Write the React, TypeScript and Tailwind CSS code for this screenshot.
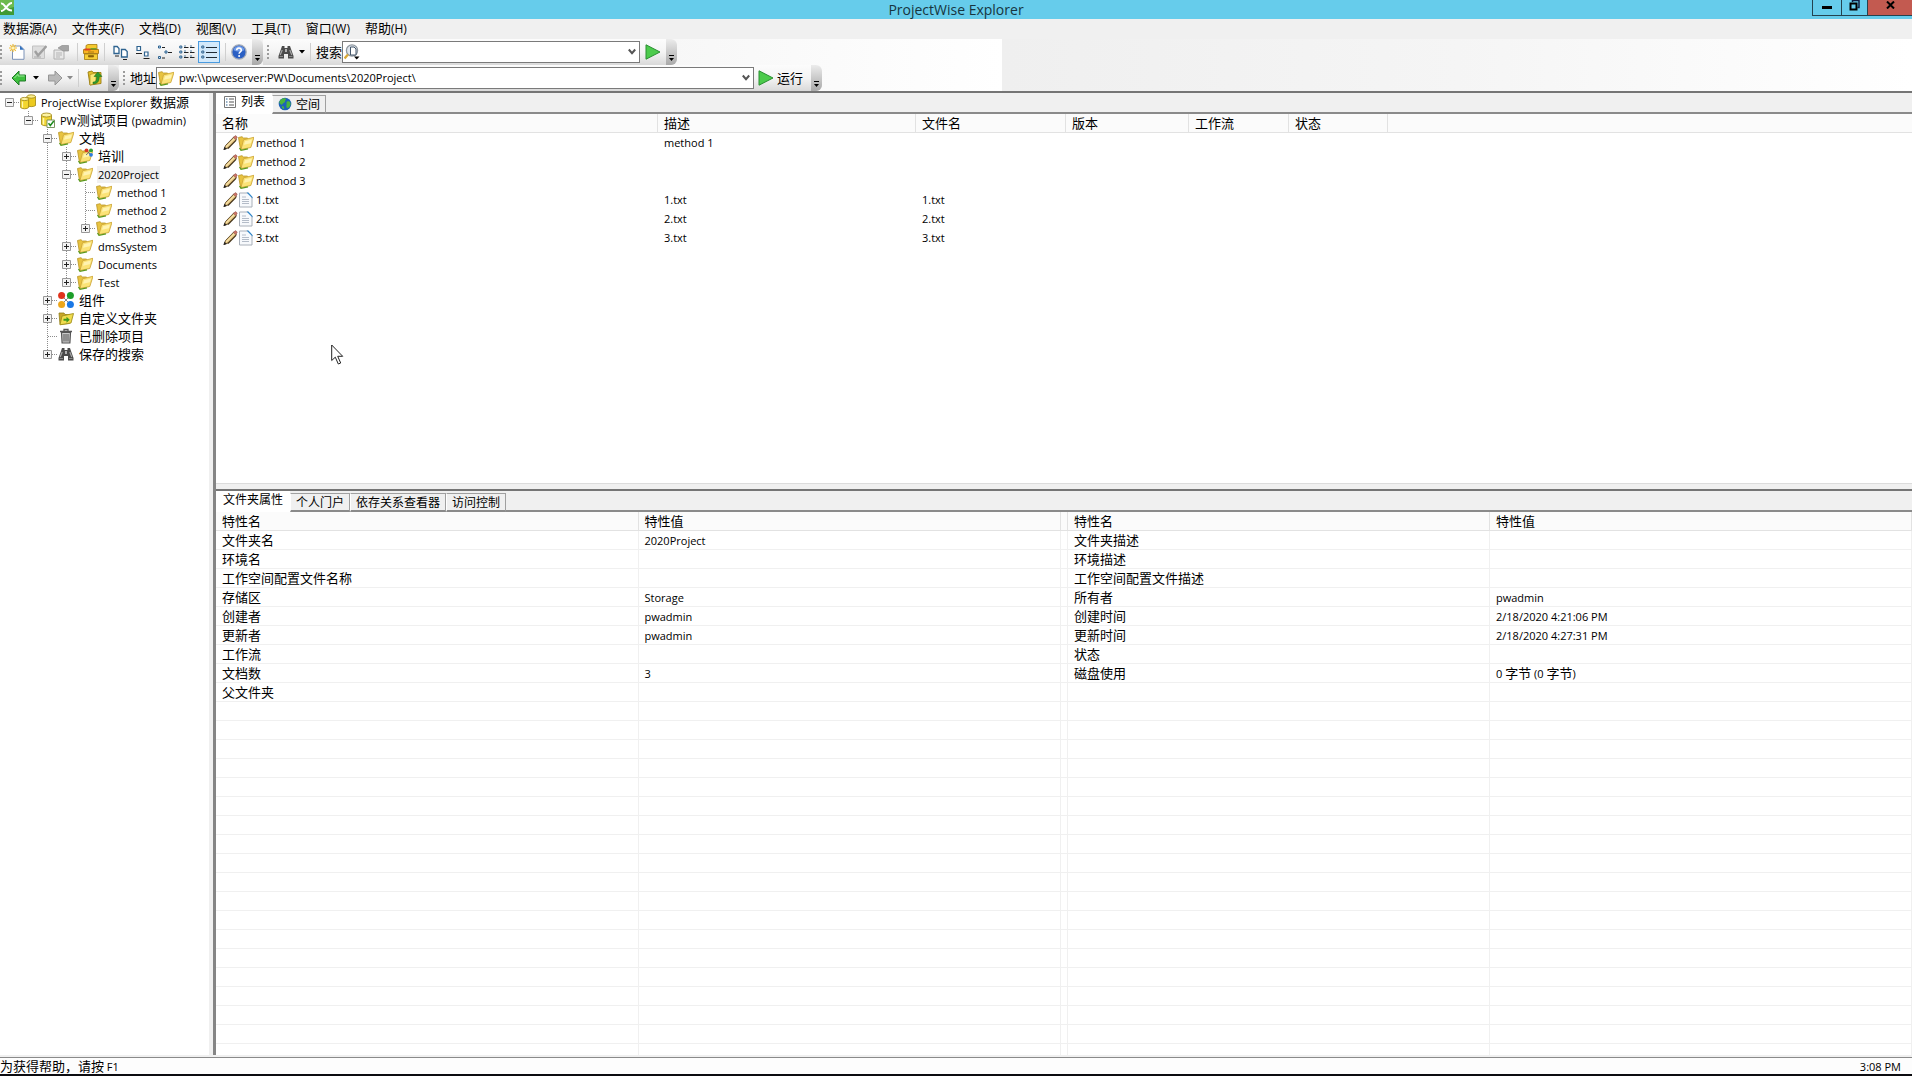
import React from "react";

const LATIN = "font-['Open_Sans','Noto_Sans_CJK_SC',sans-serif]";

interface TextProps {
  children: string;
  cjk?: string;
  latin?: string;
}

// Chinese and Latin runs are set in different sizes
const Text: React.FC<TextProps> = ({
  children,
  cjk = "text-[13px]",
  latin = "text-[11px]",
}) => {
  const runs = children.split(/([\u3000-\u9fff\uff00-\uffef]+)/).filter(Boolean);

  return (
    <span className="whitespace-pre">
      {runs.map((run, i) => (
        <span key={i} className={/[\u3000-\u9fff\uff00-\uffef]/.test(run) ? cjk : latin}>
          {run}
        </span>
      ))}
    </span>
  );
};

/* ---------- icons ---------- */

const Svg: React.FC<{ children: React.ReactNode; w?: number; h?: number }> = ({
  children,
  w = 16,
  h = 16,
}) => (
  <svg width={w} height={h} viewBox={`0 0 ${w} ${h}`} className="shrink-0" aria-hidden="true">
    {children}
  </svg>
);

const FolderShape = () => (
  <>
    <path d="M.5 2.500l3.500-.8 1.500 1.300h4L9 13l-6.500 1.500z" fill="#e8c340" stroke="#b99423" strokeWidth=".8" />
    <path d="M5.500 4.800L16 2.300 12.800 12.500 3 14.500z" fill="#fbe377" stroke="#cfa83a" strokeWidth=".9" />
    <path d="M7 6.200l7-1.800-1.200 3.800-6.800 1.600z" fill="#fff3b0" />
    <path d="M1.500 13l1.500 2.300 7-1.500" fill="none" stroke="#5c9a1f" strokeWidth="1.300" />
  </>
);

const FolderIcon = () => (
  <Svg>
    <FolderShape />
  </Svg>
);

const TrainingIcon = () => (
  <Svg>
    <FolderShape />
    <path d="M9 2.500l5 4.300M14 2.500L9 7" stroke="#555" strokeWidth=".8" />
    <circle cx="9.500" cy="2.300" r="1.900" fill="#d93a25" />
    <circle cx="14" cy="2.300" r="1.900" fill="#2fa336" />
    <circle cx="14" cy="6.800" r="1.900" fill="#2c7be0" />
  </Svg>
);

const CustomFolderIcon = () => (
  <Svg>
    <path d="M1 3h5l1 1.500h5l-.5 9L2 14.500z" fill="#c9a62a" stroke="#8f7d1b" strokeWidth=".8" />
    <path d="M4 6l11.500-2.500-2.500 9.500-11 1.800z" fill="#f0dc4e" stroke="#a3911d" strokeWidth=".9" />
    <path d="M5.500 8.800h3V6.800l3.300 3-3.300 3v-2h-3z" fill="#3f9a1d" />
  </Svg>
);

const DatasourcesIcon = () => (
  <Svg>
    <path d="M7 2.500v9c1.500 1.500 7 1.500 8.500 0v-9z" fill="#ecca1f" stroke="#9d8411" strokeWidth=".8" />
    <ellipse cx="11.200" cy="2.500" rx="4.200" ry="1.700" fill="#fbee8c" stroke="#9d8411" strokeWidth=".8" />
    <path d="M.6 5v8.500c1.500 1.700 6.500 1.700 8 0V5z" fill="#f3d62f" stroke="#9d8411" strokeWidth=".8" />
    <ellipse cx="4.600" cy="5" rx="4" ry="1.600" fill="#fdf3a2" stroke="#9d8411" strokeWidth=".8" />
    <path d="M2.500 7.500v6" stroke="#fff6b0" strokeWidth="1.200" />
  </Svg>
);

const DatasourceIcon = () => (
  <Svg>
    <path d="M2.500 3v9.500c1.500 1.800 8.500 1.800 10 0V3z" fill="#f1d535" stroke="#9d8411" strokeWidth=".8" />
    <ellipse cx="7.500" cy="3" rx="5" ry="2" fill="#fdf3a2" stroke="#9d8411" strokeWidth=".8" />
    <path d="M4.500 6v6.500" stroke="#fff6b0" strokeWidth="1.500" />
    <path d="M8 8h7.500v7.500H8z" fill="#fff" stroke="#6f8a52" strokeWidth=".9" />
    <path d="M9.500 11.300l1.800 2.200L14.800 9" fill="none" stroke="#1c8a1c" strokeWidth="1.500" />
  </Svg>
);

const ComponentsIcon = () => (
  <Svg>
    <path d="M3.500 3.500l9 9M12.500 3.500l-9 9" stroke="#888" strokeWidth="1" />
    <circle cx="3.600" cy="3.600" r="3.500" fill="#e0331c" />
    <circle cx="12.400" cy="3.600" r="3.500" fill="#1d9e2a" />
    <circle cx="3.600" cy="12.400" r="3.500" fill="#eda71b" />
    <circle cx="12.400" cy="12.400" r="3.500" fill="#1a78e6" />
  </Svg>
);

const TrashIcon = () => (
  <Svg>
    <path d="M2 3.500h12M6 3V1.500h4V3" fill="none" stroke="#555" strokeWidth="1.300" />
    <path d="M3.500 4.500h9l-.6 10.500H4.100z" fill="#c9c9c9" stroke="#555" strokeWidth="1.200" />
    <path d="M6 6v7.500M8 6v7.500M10 6v7.500" stroke="#555" />
  </Svg>
);

const BinocularsIcon = () => (
  <Svg>
    <path d="M4 2h2.500v2h3V2H12l1 3 2.500 7v2.500H10V10H6v4.500H.5V12L3 5z" fill="#4a4a4a" />
    <path d="M2.200 11l2-5M13.800 11l-2-5" stroke="#a5a5a5" strokeWidth="1.200" />
    <path d="M7.300 5h1.400v3H7.300z" fill="#ddd" />
    <path d="M1.500 12.500h3.500M11 12.500h3.500" stroke="#8b8b8b" />
  </Svg>
);

const PencilIcon = () => (
  <Svg w={15}>
    <path d="M1 14.500l1.500-4L10.800 2l2.700 2.700L5 13z" fill="#dcbb72" stroke="#5c4a2c" strokeWidth=".9" />
    <path d="M3.200 12l8.300-8.500" stroke="#f7e3ad" strokeWidth="1.200" />
    <path d="M5 13.500L13 5.300" stroke="#4d3c22" strokeWidth="1.200" />
    <path d="M10.500 2.300L12 .8c.8-.5 2.600 1.200 2 2l-1.300 1.700z" fill="#d1766a" stroke="#8a4a42" strokeWidth=".6" />
    <path d="M.5 15l1-3.200 2.200 2.100z" fill="#222" />
  </Svg>
);

const TextFileIcon = () => (
  <Svg>
    <path d="M1.500 1h8.500l4 4v10H1.500z" fill="#f7f9fc" stroke="#a9b0ba" />
    <path d="M8.500 .5h2L14.500 5v1.500z" fill="#2f86c9" />
    <path d="M4 5h4M4 7.500h7M4 9.500h7M4 11.500h7" stroke="#b4bcc8" />
  </Svg>
);

const NewDocIcon = () => (
  <Svg>
    <path d="M3.500 2h8l3.500 3.500V15.300H3.500z" fill="#fff" stroke="#7c93b8" />
    <path d="M11 1.800v4h4z" fill="#2f6fbd" />
    <path d="M0 4h8M4 0v8M1.200 1.200l5.600 5.600M6.800 1.200L1.200 6.800" stroke="#eebc3b" strokeWidth="1.200" />
    <circle cx="4" cy="4" r="1.500" fill="#fff3b8" />
  </Svg>
);

const CheckDocIcon = () => (
  <Svg>
    <path d="M1.500 2h12v12.500h-12z" fill="#dedede" stroke="#c2c2c2" />
    <path d="M4 7l3 4.500L15.500 2" fill="none" stroke="#a0a0a0" strokeWidth="2.400" />
    <path d="M3 13h7" stroke="#a8a8a8" />
  </Svg>
);

const PropertiesIcon = () => (
  <Svg>
    <path d="M1 6h10v9H1z" fill="#e8e8e8" stroke="#b0b0b0" />
    <path d="M3 9h6M3 11h6M3 13h4" stroke="#b5b5b5" />
    <path d="M5 4l4-2.500h6.500V7H10L8 5.500z" fill="#a5a5a5" stroke="#8f8f8f" strokeWidth=".7" />
  </Svg>
);

const DrawerIcon = () => (
  <Svg>
    <path d="M3 1.500L5 .5h9V6H3z" fill="#f5c92d" stroke="#a57b0d" strokeWidth=".8" />
    <path d="M.5 5.500h15v4H.5z" fill="#f9b522" stroke="#a0700a" strokeWidth=".8" />
    <path d="M1.500 4.500h6v2h-6z" fill="#da4320" />
    <path d="M7.500 4.800h6" stroke="#3f8f2a" />
    <path d="M1.500 10h13v5.500h-13z" fill="#f7cf36" stroke="#a57b0d" strokeWidth=".8" />
    <path d="M5.500 11.500h5v1.500h-5zM5 8h6" fill="#8a6209" stroke="#8a6209" strokeWidth=".7" />
  </Svg>
);

const LargeIconsIcon = () => (
  <Svg>
    <path d="M1 2.500h3.200l1.800 2v5H1zM8.500 5.500h3.700l2 2v5.500H8.500z" fill="#fff" stroke="#2e6390" strokeWidth="1.300" />
    <path d="M2 12h4M10 15.500h4" stroke="#222" />
  </Svg>
);

const SmallIconsIcon = () => (
  <Svg>
    <path d="M2 2.500h3.500v4H2zM9.500 8h3.500v4H9.500z" fill="#fff" stroke="#2e6390" strokeWidth="1.200" />
    <path d="M1 9.500h6M8.500 14.500h6" stroke="#222" />
  </Svg>
);

const ListIconsIcon = () => (
  <Svg>
    <path d="M1.500 2h2v2h-2zM8 7h2v2H8zM1.500 12.500h2v2h-2z" fill="#cfe3f2" stroke="#2e6390" />
    <path d="M5 3.500h3M11 8.500h4M5 14h3" stroke="#222" />
  </Svg>
);

const GridIconsIcon = () => (
  <Svg>
    {[2, 7, 12].map((y) => (
      <g key={y}>
        <path d={`M.8 ${y}h2v2h-2z`} fill="#cfe3f2" stroke="#2e6390" />
        <path d={`M5 ${y + 1}.5h4.500M11 ${y + 1}.5h4.500`} stroke="#222" />
        <path d={`M5 ${y}h2M11 ${y}h2`} stroke="#2e6390" strokeWidth=".8" />
      </g>
    ))}
  </Svg>
);

const DetailsIcon = () => (
  <Svg>
    {[2, 7, 12].map((y) => (
      <g key={y}>
        <path d={`M.8 ${y}h2v2h-2z`} fill="#cfe3f2" stroke="#2e6390" />
        <path d={`M5 ${y + 1}.5h11`} stroke="#1f2b36" />
      </g>
    ))}
  </Svg>
);

const HelpIcon = () => (
  <Svg>
    <circle cx="8" cy="8" r="7.200" fill="#2a5fc4" stroke="#a3abb8" strokeWidth="1.300" />
    <path d="M2.500 6a5.800 5.800 0 0 1 11 0c-3 2-8 2-11 0z" fill="#6f9be8" />
    <path d="M5.700 6.300c0-3 4.600-3 4.600 0 0 1.700-2.200 1.600-2.200 3.500" fill="none" stroke="#fff" strokeWidth="1.500" />
    <circle cx="8.100" cy="11.900" r="1" fill="#fff" />
  </Svg>
);

const SearchDocIcon = () => (
  <Svg>
    <circle cx="8" cy="6.500" r="5.600" fill="#dfe6ee" stroke="#8f979f" strokeWidth="1.300" />
    <path d="M6.500 3h3.500L12 5v6H6.500z" fill="#fff" stroke="#44576b" />
    <path d="M4 10.500l-3.500 4" stroke="#d9a93a" strokeWidth="2.400" />
    <path d="M10 12.500h5.500L12.700 15.500z" fill="#000" />
  </Svg>
);

const BackIcon = () => (
  <Svg>
    <path d="M1 8l7-7v4h6.500v6H8v4z" fill="#3fc13f" stroke="#1f7a26" />
    <path d="M3.500 8L7 4.300V6h6.500" fill="none" stroke="#9be79a" />
  </Svg>
);

const ForwardIcon = () => (
  <Svg>
    <path d="M15 8L8 1v4H1.500v6H8v4z" fill="#b9b9b9" stroke="#969696" />
  </Svg>
);

const UpFolderIcon = () => (
  <Svg>
    <path d="M1 2l4-1 1 1.500h8v11L3 15z" fill="#e4c12a" stroke="#9a7d12" strokeWidth=".9" />
    <path d="M3 4.500L9 3v10.500L3 15z" fill="#f8e778" stroke="#a68a1a" strokeWidth=".7" />
    <path d="M6 12c2.800 0 3.700-1.500 3.700-5.500H7L10.900 2 15 6.500h-2.700c0 5-1.800 7.300-6.300 7.300z" fill="#2f9a2f" stroke="#176b17" strokeWidth=".5" />
  </Svg>
);

const PlayIcon = () => (
  <Svg>
    <path d="M1 .8v14.400L15 8z" fill="#4ccb4c" stroke="#2b8f33" />
  </Svg>
);

const ListTabIcon = () => (
  <Svg w={14} h={14}>
    <path d="M1.500 1.500h11v11h-11z" fill="#fff" stroke="#777" />
    <path d="M3 4h1.500M3 7h1.500M3 10h1.500" stroke="#2e6390" />
    <path d="M6 4h5M6 7h5M6 10h5" stroke="#555" />
  </Svg>
);

const GlobeIcon = () => (
  <Svg w={14} h={14}>
    <circle cx="7" cy="7" r="6.300" fill="#1c62b8" />
    <path d="M3 2.500c2-1.800 5-1.500 5-.5s-1 1-1 2.500-2 1-2.500 2.500S2 7 1.500 6 2 3.300 3 2.500zM9 4.500c1.500-.8 3-.3 3.500 1.500S11.500 10.500 10 11 8 9.500 8.500 8 8 5.500 9 4.500zM4 9c1.500 0 2.500 1 2 3-1.500 0-2.500-1.500-2-3z" fill="#49b53c" />
  </Svg>
);

const Caret: React.FC<{ color?: string }> = ({ color = "#000" }) => (
  <Svg w={6} h={4}>
    <path d="M0 0h6L3 3.500z" fill={color} />
  </Svg>
);

const Chevron = () => (
  <svg width="8" height="8" viewBox="0 0 8 8" className="pointer-events-none absolute top-[7px] right-1" aria-hidden="true">
    <path d="M.8 1.500L4 5.200 7.200 1.500" fill="none" stroke="#555" strokeWidth="2" />
  </svg>
);

/* ---------- toolbars ---------- */

const Grip = () => (
  <Svg w={3} h={16}>
    <path d="M0 1h2v2H0zM0 5h2v2H0zM0 9h2v2H0zM0 13h2v2H0z" fill="#9b9b9b" />
  </Svg>
);

const Separator = () => <div className="mx-[5px] h-[18px] w-px shrink-0 bg-[#cfcfcf]" />;

const ToolButton: React.FC<{ label: string; active?: boolean; children: React.ReactNode }> = ({
  label,
  active,
  children,
}) => (
  <button
    aria-label={label}
    className={
      active
        ? "flex h-[22px] w-[22px] shrink-0 items-center justify-center border border-[#4a9be0] bg-[#d3e9fb]"
        : "flex h-[22px] w-[22px] shrink-0 items-center justify-center"
    }
  >
    {children}
  </button>
);

const Overflow = () => (
  <button
    aria-label="工具栏选项"
    className="flex h-[26px] w-[11px] shrink-0 flex-col items-center justify-end gap-[2px] rounded-r-md bg-linear-to-b from-[#ececec] to-[#a9a9a9] pb-1"
  >
    <span className="h-px w-[5px] bg-black" />
    <Svg w={5} h={3}>
      <path d="M0 0h5L2.500 3z" fill="#000" />
    </Svg>
  </button>
);

const BAND = "flex h-[26px] items-center rounded-r-md bg-linear-to-b from-[#fcfcfc] via-[#f4f4f4] to-[#d9d9d9]";

const Toolbars = () => (
  <div className="flex border-b-2 border-[#757575] bg-[#f0f0f0]">
    <div className="w-[1002px] shrink-0 bg-linear-to-r from-[#efefef] via-[#f3f3f3] to-white">
      <div className="flex">
        <div className={BAND}>
          <Grip />
          <div className="flex pl-[3px]">
            <ToolButton label="新建"><NewDocIcon /></ToolButton>
            <ToolButton label="修改"><CheckDocIcon /></ToolButton>
            <ToolButton label="属性"><PropertiesIcon /></ToolButton>
          </div>
          <Separator />
          <DrawerIcon />
          <Separator />
          <div className="flex">
            <ToolButton label="大图标"><LargeIconsIcon /></ToolButton>
            <ToolButton label="小图标"><SmallIconsIcon /></ToolButton>
            <ToolButton label="列表"><ListIconsIcon /></ToolButton>
            <ToolButton label="平铺"><GridIconsIcon /></ToolButton>
            <ToolButton label="详细信息" active><DetailsIcon /></ToolButton>
          </div>
          <Separator />
          <div className="pr-[5px]"><HelpIcon /></div>
          <Overflow />
        </div>
        <div className={BAND}>
          <div className="pr-2 pl-1"><Grip /></div>
          <BinocularsIcon />
          <div className="pl-[5px]"><Caret /></div>
          <Separator />
          <label htmlFor="search" className="leading-[18px]"><Text>搜索</Text></label>
          <div className="relative">
            <select id="search" className="block h-[22px] w-[298px] appearance-none border border-[#7a7a7a] bg-white" />
            <div className="pointer-events-none absolute top-[3px] left-[2px]"><SearchDocIcon /></div>
            <Chevron />
          </div>
          <div className="px-[2px]">
            <ToolButton label="搜索"><PlayIcon /></ToolButton>
          </div>
          <Overflow />
        </div>
      </div>
      <div className="flex">
        <div className={BAND}>
          <Grip />
          <div className="flex items-center pl-[5px]">
            <ToolButton label="后退"><BackIcon /></ToolButton>
            <div className="pr-[5px] pl-[3px]"><Caret /></div>
            <ToolButton label="前进"><ForwardIcon /></ToolButton>
            <div className="pl-px"><Caret color="#8a8a8a" /></div>
          </div>
          <Separator />
          <div className="pr-[2px]">
            <ToolButton label="上一级"><UpFolderIcon /></ToolButton>
          </div>
          <Overflow />
        </div>
        <div className={BAND}>
          <div className="pr-1 pl-1"><Grip /></div>
          <label htmlFor="address" className="leading-[18px]"><Text>地址</Text></label>
          <div className="relative">
            <select
              id="address"
              className={`block h-[22px] w-[598px] appearance-none border border-[#7a7a7a] bg-white pl-[22px] text-[11px] text-black ${LATIN}`}
            >
              <option>{"pw:\\\\pwceserver:PW\\Documents\\2020Project\\"}</option>
            </select>
            <div className="pointer-events-none absolute top-[3px] left-[2px]"><FolderIcon /></div>
            <Chevron />
          </div>
          <button className="flex items-center gap-[3px] pr-2 pl-1 leading-[18px]">
            <PlayIcon />
            <Text>运行</Text>
          </button>
          <Overflow />
        </div>
      </div>
    </div>
    <div className="flex-1 bg-linear-to-r from-[#efefef] via-[#f5f5f5] to-white" />
  </div>
);

/* ---------- tree ---------- */

// guides, one char per level: "|" passes through, "T" branches, "L" ends, "-" has no trunk
const tree = [
  { guides: "-", box: "-", icon: <DatasourcesIcon />, label: "ProjectWise Explorer 数据源" },
  { guides: " L", box: "-", icon: <DatasourceIcon />, label: "PW测试项目 (pwadmin)" },
  { guides: "  T", box: "-", icon: <FolderIcon />, label: "文档" },
  { guides: "  |T", box: "+", icon: <TrainingIcon />, label: "培训" },
  { guides: "  |T", box: "-", icon: <FolderIcon />, label: "2020Project", selected: true },
  { guides: "  ||T", box: "", icon: <FolderIcon />, label: "method 1" },
  { guides: "  ||T", box: "", icon: <FolderIcon />, label: "method 2" },
  { guides: "  ||L", box: "+", icon: <FolderIcon />, label: "method 3" },
  { guides: "  |T", box: "+", icon: <FolderIcon />, label: "dmsSystem" },
  { guides: "  |T", box: "+", icon: <FolderIcon />, label: "Documents" },
  { guides: "  |L", box: "+", icon: <FolderIcon />, label: "Test" },
  { guides: "  T", box: "+", icon: <ComponentsIcon />, label: "组件" },
  { guides: "  T", box: "+", icon: <CustomFolderIcon />, label: "自定义文件夹" },
  { guides: "  T", box: "", icon: <TrashIcon />, label: "已删除项目" },
  { guides: "  L", box: "+", icon: <BinocularsIcon />, label: "保存的搜索" },
];

const Guide: React.FC<{ type: string; box?: string }> = ({ type, box }) => (
  <Svg w={19} h={18}>
    <g stroke="#8c8c8c" strokeDasharray="1 1">
      {(type === "|" || type === "T") && <path d="M9.500 0v18" />}
      {type === "L" && <path d="M9.500 0v9" />}
      {type !== "|" && type !== " " && <path d="M10 9.500h9" />}
    </g>
    {box && (
      <>
        <path d="M5.500 5.500h8v8h-8z" fill="#f3f3f3" stroke="#989898" />
        <path d={box === "+" ? "M7 9.500h5M9.500 7v5" : "M7 9.500h5"} stroke="#222" />
      </>
    )}
  </Svg>
);

const Tree = () => (
  <ul className="w-[209px] shrink-0 overflow-hidden bg-white">
    {tree.map(({ guides, box, icon, label, selected }) => (
      <li key={label + guides} className="flex h-[18px] items-center">
        {guides.split("").map((type, i) => (
          <Guide key={i} type={type} box={i === guides.length - 1 ? box : ""} />
        ))}
        <div className="pl-px">{icon}</div>
        <span className={selected ? "ml-1 bg-[#f0f0f0] px-px leading-4" : "ml-1 px-px leading-4"}>
          <Text>{label}</Text>
        </span>
      </li>
    ))}
  </ul>
);

/* ---------- panes ---------- */

const TabBar: React.FC<{ tabs: { label: string; icon?: React.ReactNode }[] }> = ({ tabs }) => (
  <div className="flex items-end bg-[#f0f0f0]" role="tablist">
    {tabs.map(({ label, icon }, i) => (
      <button
        key={label}
        role="tab"
        aria-selected={i === 0}
        className={
          i === 0
            ? "flex h-[21px] items-center gap-1 bg-white px-[7px] pb-1 leading-4"
            : "flex h-[19px] items-center gap-1 border border-b-2 border-[#a0a0a0] border-b-[#8a8a8a] border-l-white px-[5px] leading-4"
        }
      >
        {icon}
        <Text cjk="text-[12px]">{label}</Text>
      </button>
    ))}
    <div className="h-[21px] flex-1 border-b-2 border-[#8a8a8a]" />
  </div>
);

const HEAD = "h-[19px] border-r border-b border-[#e2e2e2] bg-[#fbfbfb] px-[6px] py-0 text-left font-normal";

const columns = [
  { label: "名称", width: "w-[442px]" },
  { label: "描述", width: "w-[258px]" },
  { label: "文件名", width: "w-[150px]" },
  { label: "版本", width: "w-[123px]" },
  { label: "工作流", width: "w-[100px]" },
  { label: "状态", width: "w-[99px]" },
];

const files = [
  { name: "method 1", description: "method 1", file: "", folder: true },
  { name: "method 2", description: "", file: "", folder: true },
  { name: "method 3", description: "", file: "", folder: true },
  { name: "1.txt", description: "1.txt", file: "1.txt", folder: false },
  { name: "2.txt", description: "2.txt", file: "2.txt", folder: false },
  { name: "3.txt", description: "3.txt", file: "3.txt", folder: false },
];

const FileList = () => (
  <table className="w-full table-fixed border-separate border-spacing-0 leading-4">
    <thead>
      <tr>
        {columns.map(({ label, width }) => (
          <th key={label} className={`${HEAD} ${width}`}>
            <Text>{label}</Text>
          </th>
        ))}
        <th className="border-b border-[#e2e2e2] bg-[#fbfbfb]" />
      </tr>
    </thead>
    <tbody>
      {files.map(({ name, description, file, folder }) => (
        <tr key={name} className="h-[19px]">
          <td className="p-0">
            <div className="flex items-center pl-[7px]">
              <PencilIcon />
              {folder ? <FolderIcon /> : <TextFileIcon />}
              <span className="pl-[2px]"><Text>{name}</Text></span>
            </div>
          </td>
          <td className="px-[6px] py-0"><Text>{description}</Text></td>
          <td className="px-[6px] py-0"><Text>{file}</Text></td>
        </tr>
      ))}
    </tbody>
  </table>
);

const leftProps = [
  ["文件夹名", "2020Project"],
  ["环境名", ""],
  ["工作空间配置文件名称", ""],
  ["存储区", "Storage"],
  ["创建者", "pwadmin"],
  ["更新者", "pwadmin"],
  ["工作流", ""],
  ["文档数", "3"],
  ["父文件夹", ""],
];

const rightProps = [
  ["文件夹描述", ""],
  ["环境描述", ""],
  ["工作空间配置文件描述", ""],
  ["所有者", "pwadmin"],
  ["创建时间", "2/18/2020 4:21:06 PM"],
  ["更新时间", "2/18/2020 4:27:31 PM"],
  ["状态", ""],
  ["磁盘使用", "0 字节 (0 字节)"],
];

const ROWS = 28;
const CELL = "h-[19px] border-r border-b border-[#f0f0f0] px-[6px] py-0";

const PropertyTable: React.FC<{ rows: string[][]; gutter?: boolean }> = ({ rows, gutter }) => (
  <table className="w-full table-fixed border-separate border-spacing-0 self-start leading-4">
    <thead>
      <tr>
        <th className={HEAD}><Text>特性名</Text></th>
        <th className={HEAD}><Text>特性值</Text></th>
        {gutter && <th className="w-[7px] border-r border-b border-[#e2e2e2] bg-[#fbfbfb]" />}
      </tr>
    </thead>
    <tbody>
      {Array.from({ length: ROWS }, (_, i) => rows[i] ?? ["", ""]).map(([name, value], i) => (
        <tr key={i}>
          <td className={CELL}><Text>{name}</Text></td>
          <td className={CELL}><Text>{value}</Text></td>
          {gutter && <td className="border-r border-b border-[#f0f0f0]" />}
        </tr>
      ))}
    </tbody>
  </table>
);

/* ---------- window ---------- */

const TitleBar = () => (
  <header className="grid h-[19px] grid-cols-[1fr_auto_1fr] bg-[#66cceb]">
    <Svg w={14} h={15}>
      <path d="M0 0h14v15H0z" fill="#3f9a35" />
      <path d="M0 0h14v7L0 11z" fill="#6cba4e" />
      <path d="M1 3.500c4-1 4 7 11 7M1 11c5 0 6-8 11-8" fill="none" stroke="#fff" strokeWidth="2" />
    </Svg>
    <h1 className="text-[14px] leading-[19px] text-[#173540]">ProjectWise Explorer</h1>
    <div className="flex h-4 justify-self-end border-b border-[#24434f]">
      <button aria-label="最小化" className="flex w-[29px] items-center justify-center border-l border-[#24434f]">
        <span className="h-[3px] w-[10px] bg-black" />
      </button>
      <button aria-label="还原" className="flex w-[26px] items-start justify-center border-l border-[#24434f]">
        <Svg w={11} h={11}>
          <path d="M3.500 0v2M3 .5h7v7H8.500" fill="none" stroke="#101c40" strokeWidth="1.500" />
          <path d="M1.500 3.500h6v6h-6z" fill="none" stroke="#000" strokeWidth="2" />
        </Svg>
      </button>
      <button aria-label="关闭" className="flex w-[45px] items-start justify-center border-l border-[#24434f] bg-[#c35a50] pt-px">
        <Svg w={9} h={8}>
          <path d="M1 .5l7 7M8 .5l-7 7" stroke="#000" strokeWidth="2" />
        </Svg>
      </button>
    </div>
  </header>
);

const menus = ["数据源(A)", "文件夹(F)", "文档(D)", "视图(V)", "工具(T)", "窗口(W)", "帮助(H)"];

const App = () => (
  <div className={`relative flex h-screen flex-col overflow-hidden bg-[#f0f0f0] text-[13px] text-black ${LATIN}`}>
    <TitleBar />
    <nav className="flex h-5 items-start gap-[15px] bg-[#f0f0f0] pl-[3px] leading-[18px]">
      {menus.map((menu) => (
        <button key={menu}>
          <Text latin="text-[12px]">{menu}</Text>
        </button>
      ))}
    </nav>
    <Toolbars />
    <div className="flex min-h-0 flex-1">
      <Tree />
      <div className="w-1 shrink-0 bg-[#f0f0f0]" />
      <main className="flex min-w-0 flex-1 flex-col border-l-[3px] border-[#858585]">
        <section className="h-[391px] shrink-0 overflow-hidden border-b border-[#dcdcdc] bg-white">
          <TabBar tabs={[{ label: "列表", icon: <ListTabIcon /> }, { label: "空间", icon: <GlobeIcon /> }]} />
          <FileList />
        </section>
        <div className="h-[5px] shrink-0 bg-[#f0f0f0]" />
        <section className="flex min-h-0 flex-1 flex-col overflow-hidden border-t-2 border-[#757575] bg-white">
          <TabBar
            tabs={[{ label: "文件夹属性" }, { label: "个人门户" }, { label: "依存关系查看器" }, { label: "访问控制" }]}
          />
          <div className="grid min-h-0 flex-1 grid-cols-[852fr_844fr] overflow-hidden">
            <PropertyTable rows={leftProps} gutter />
            <PropertyTable rows={rightProps} />
          </div>
        </section>
      </main>
    </div>
    <footer className="mt-[2px] flex h-[19px] shrink-0 justify-between border-t border-b-2 border-t-[#8a8a8a] border-b-[#0c0c10] bg-[#fdfdfd] pr-[11px] leading-4">
      <Text>为获得帮助，请按 F1</Text>
      <Text>3:08 PM</Text>
    </footer>

    {/* mouse pointer */}
    <svg width="13" height="21" viewBox="0 0 13 21" className="pointer-events-none absolute top-[344px] left-[331px]" aria-hidden="true">
      <path d="M.7 1v15.500l3.600-3.300 3 6.800 2.400-1-3-6.700h5z" fill="#fff" stroke="#222" />
    </svg>
  </div>
);

export default App;
